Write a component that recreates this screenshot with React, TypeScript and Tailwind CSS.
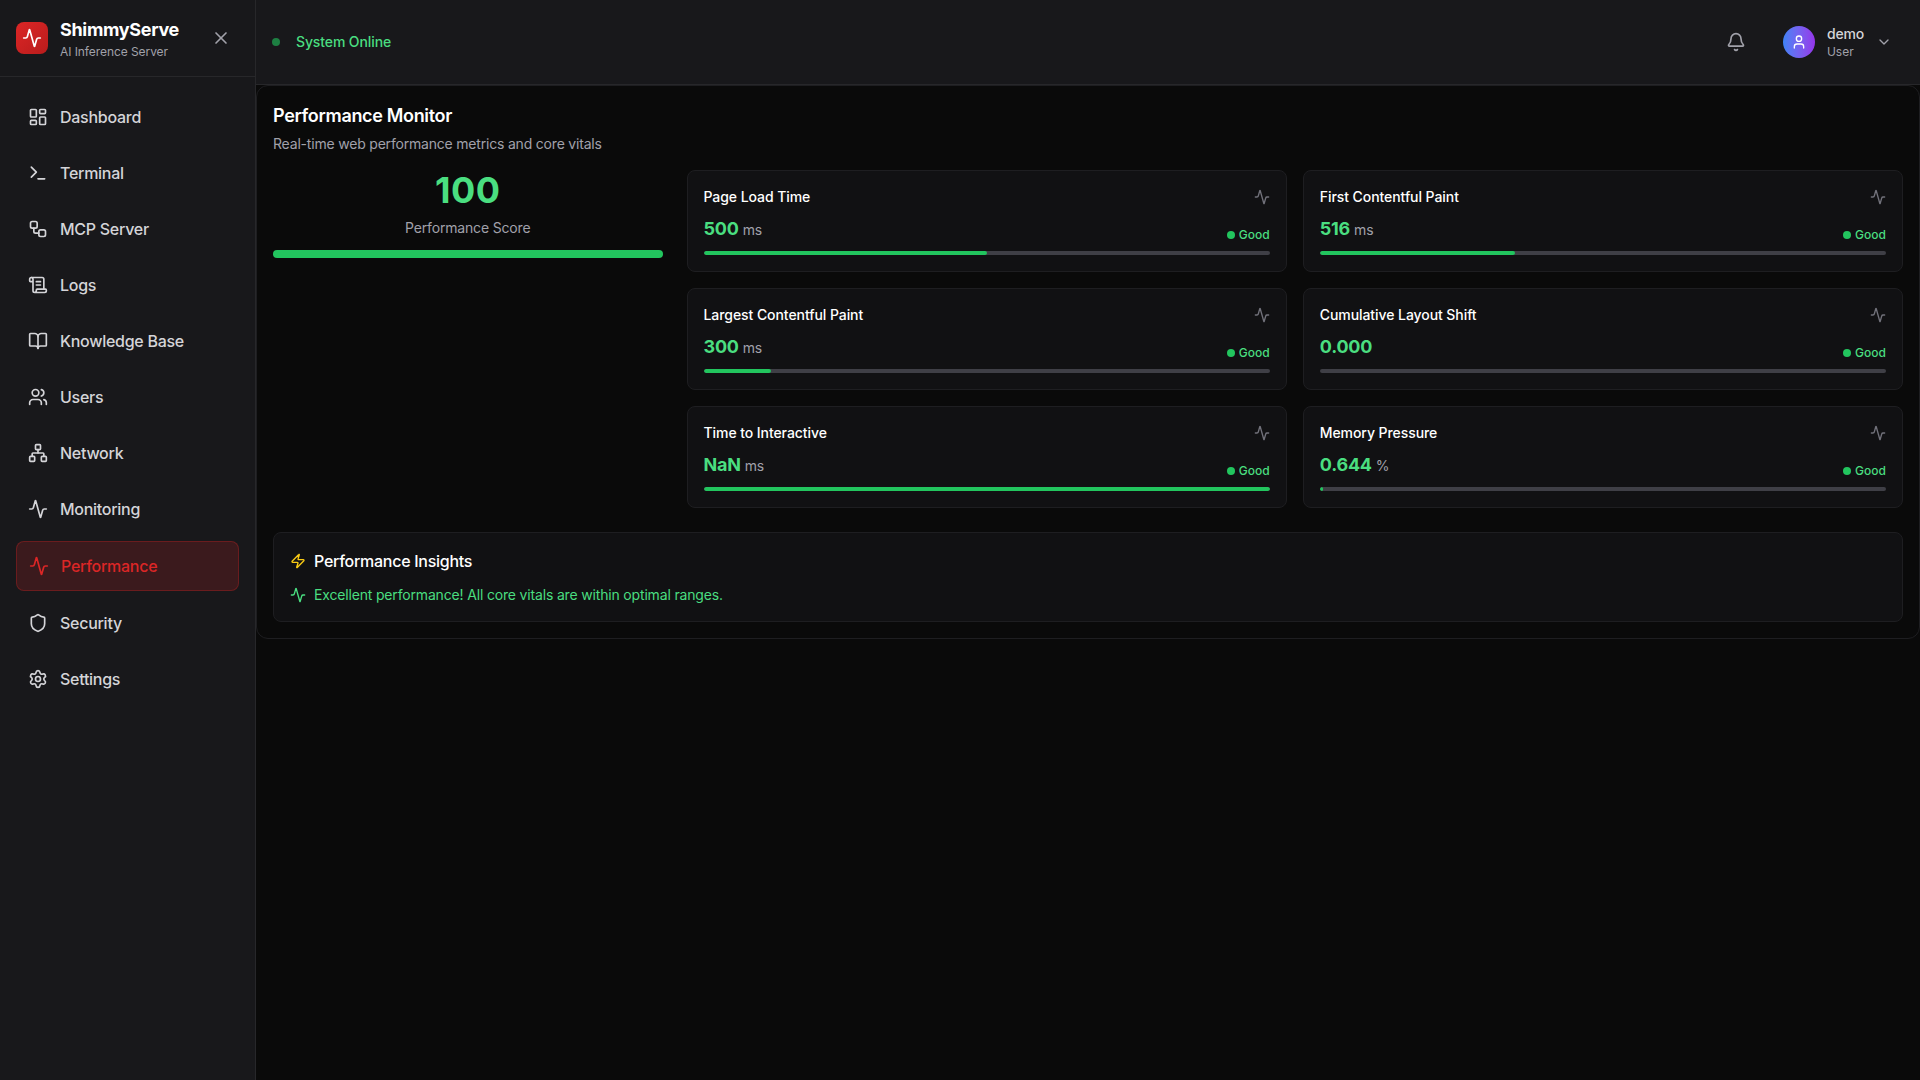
import { Activity, Bell, BookOpen, ChevronDown, LayoutDashboard, Network, ScrollText, Settings, Shield, Terminal, User, Users, Workflow, X, Zap } from 'lucide-react'

const navItems = [
  { label: 'Dashboard', icon: LayoutDashboard },
  { label: 'Terminal', icon: Terminal },
  { label: 'MCP Server', icon: Workflow },
  { label: 'Logs', icon: ScrollText },
  { label: 'Knowledge Base', icon: BookOpen },
  { label: 'Users', icon: Users },
  { label: 'Network', icon: Network },
  { label: 'Monitoring', icon: Activity },
  { label: 'Performance', icon: Activity, active: true },
  { label: 'Security', icon: Shield },
  { label: 'Settings', icon: Settings }
]

const metrics = [
  { name: 'Page Load Time', value: '500', unit: 'ms', pct: 50 },
  { name: 'First Contentful Paint', value: '516', unit: 'ms', pct: 34.4 },
  { name: 'Largest Contentful Paint', value: '300', unit: 'ms', pct: 12 },
  { name: 'Cumulative Layout Shift', value: '0.000', unit: '', pct: 0 },
  { name: 'Time to Interactive', value: 'NaN', unit: 'ms', pct: 100 },
  { name: 'Memory Pressure', value: '0.644', unit: '%', pct: 0.644 }
]

function MetricCard({ m }: { m: typeof metrics[number] }) {
  return (
    <div className="bg-[#111113] border border-[#1e1e21] rounded-lg p-4 h-[102px]">
      <div className="flex items-center justify-between h-5">
        <div className="text-sm font-medium text-white tracking-[-0.005em]">{m.name}</div>
        <Activity className="w-4 h-4 text-[#71717a]" />
      </div>
      <div className="flex items-end justify-between mt-2 h-7">
        <div className="flex items-baseline gap-1">
          <span className="text-lg font-bold text-[#4ade80] tracking-[-0.012em]">{m.value}</span>
          {m.unit && <span className="text-sm text-[#a1a1aa] tracking-[-0.012em]">{m.unit}</span>}
        </div>
        <div className="flex items-center gap-1 text-xs font-medium text-[#4ade80]">
          <span className="w-2 h-2 rounded-full bg-[#22c55e]" />
          Good
        </div>
      </div>
      <div className="h-1 mt-2 rounded-full bg-[#3f3f46] overflow-hidden">
        <div className="h-full rounded-full bg-[#22c55e]" style={{ width: `${m.pct}%` }} />
      </div>
    </div>
  )
}

export default function App() {
  return (
    <div className="flex h-screen overflow-hidden bg-[#0a0a0a] font-['Inter',sans-serif]">
      <aside className="w-64 shrink-0 bg-[#18181b] border-r border-[#27272a]">
        <div className="h-[77px] px-4 flex items-center justify-between border-b border-[#27272a]">
          <div className="flex items-center gap-3">
            <div className="w-8 h-8 rounded-lg bg-gradient-to-br from-[#dc2626] to-[#b91c1c] flex items-center justify-center">
              <Activity className="w-5 h-5 text-white" />
            </div>
            <div>
              <div className="text-lg leading-7 font-bold text-white tracking-[-0.018em]">ShimmyServe</div>
              <div className="text-xs text-[#a1a1aa] tracking-[-0.006em]">AI Inference Server</div>
            </div>
          </div>
          <X className="w-5 h-5 mr-2 text-[#a1a1aa]" />
        </div>
        <nav className="pt-4 px-4 flex flex-col gap-2">
          {navItems.map(item => {
            const Icon = item.icon
            return item.active ? (
              <div key={item.label} className="flex items-center gap-3 px-3 py-3 rounded-lg border border-[#dc2626]/30 bg-[#dc2626]/[0.18] text-[#dc2626]">
                <Icon className="w-5 h-5" />
                <span className="font-medium tracking-[-0.017em]">{item.label}</span>
              </div>
            ) : (
              <div key={item.label} className="flex items-center gap-3 px-3 py-3 rounded-lg text-[#d4d4d8]">
                <Icon className="w-5 h-5" />
                <span className="font-medium tracking-[-0.017em]">{item.label}</span>
              </div>
            )
          })}
        </nav>
      </aside>
      <div className="flex-1 min-w-0 flex flex-col">
        <header className="h-[85px] shrink-0 bg-[#18181b] border-b border-[#27272a] pl-4 pr-[28px] flex items-center justify-between">
          <div className="flex items-center gap-4">
            <span className="w-2 h-2 rounded-full bg-[#22c55e]/60" />
            <span className="text-sm font-medium text-[#4ade80] tracking-[-0.008em]">System Online</span>
          </div>
          <div className="flex items-center">
            <Bell className="w-5 h-5 mr-[37px] text-[#a1a1aa]" />
            <div className="w-8 h-8 rounded-full bg-gradient-to-r from-[#3b82f6] to-[#9333ea] flex items-center justify-center">
              <User className="w-4 h-4 text-white" />
            </div>
            <div className="ml-3">
              <div className="text-sm font-medium text-[#d4d4d8] tracking-[-0.012em]">demo</div>
              <div className="text-xs text-[#a1a1aa]">User</div>
            </div>
            <ChevronDown className="w-4 h-4 ml-3 text-[#a1a1aa]" />
          </div>
        </header>
        <main className="flex-1 min-h-0">
          <div className="bg-[#0a0a0a] border border-[#1e1e21] rounded-xl p-4">
            <h1 className="text-lg font-semibold text-white tracking-[-0.018em]">Performance Monitor</h1>
            <p className="text-sm text-[#a1a1aa] mt-1 tracking-[-0.014em]">Real-time web performance metrics and core vitals</p>
            <div className="grid grid-cols-4 gap-6 mt-4">
              <div>
                <div className="text-center">
                  <div className="text-4xl font-bold text-[#4ade80] tracking-[0.015em]">100</div>
                  <div className="text-sm text-[#a1a1aa] mt-2 tracking-[-0.012em]">Performance Score</div>
                </div>
                <div className="h-2 mt-3 rounded-full bg-[#22c55e]" />
              </div>
              <div className="col-span-3 grid grid-cols-2 gap-4">
                {metrics.map(m => <MetricCard key={m.name} m={m} />)}
              </div>
            </div>
            <div className="mt-6 bg-[#111113] border border-[#1e1e21] rounded-lg p-4">
              <div className="flex items-center gap-2">
                <Zap className="w-4 h-4 text-[#facc15]" />
                <span className="font-medium text-white tracking-[-0.017em]">Performance Insights</span>
              </div>
              <div className="flex items-center gap-2 mt-3 text-sm text-[#4ade80] tracking-[-0.012em]">
                <Activity className="w-4 h-4" />
                Excellent performance! All core vitals are within optimal ranges.
              </div>
            </div>
          </div>
        </main>
      </div>
    </div>
  )
}
